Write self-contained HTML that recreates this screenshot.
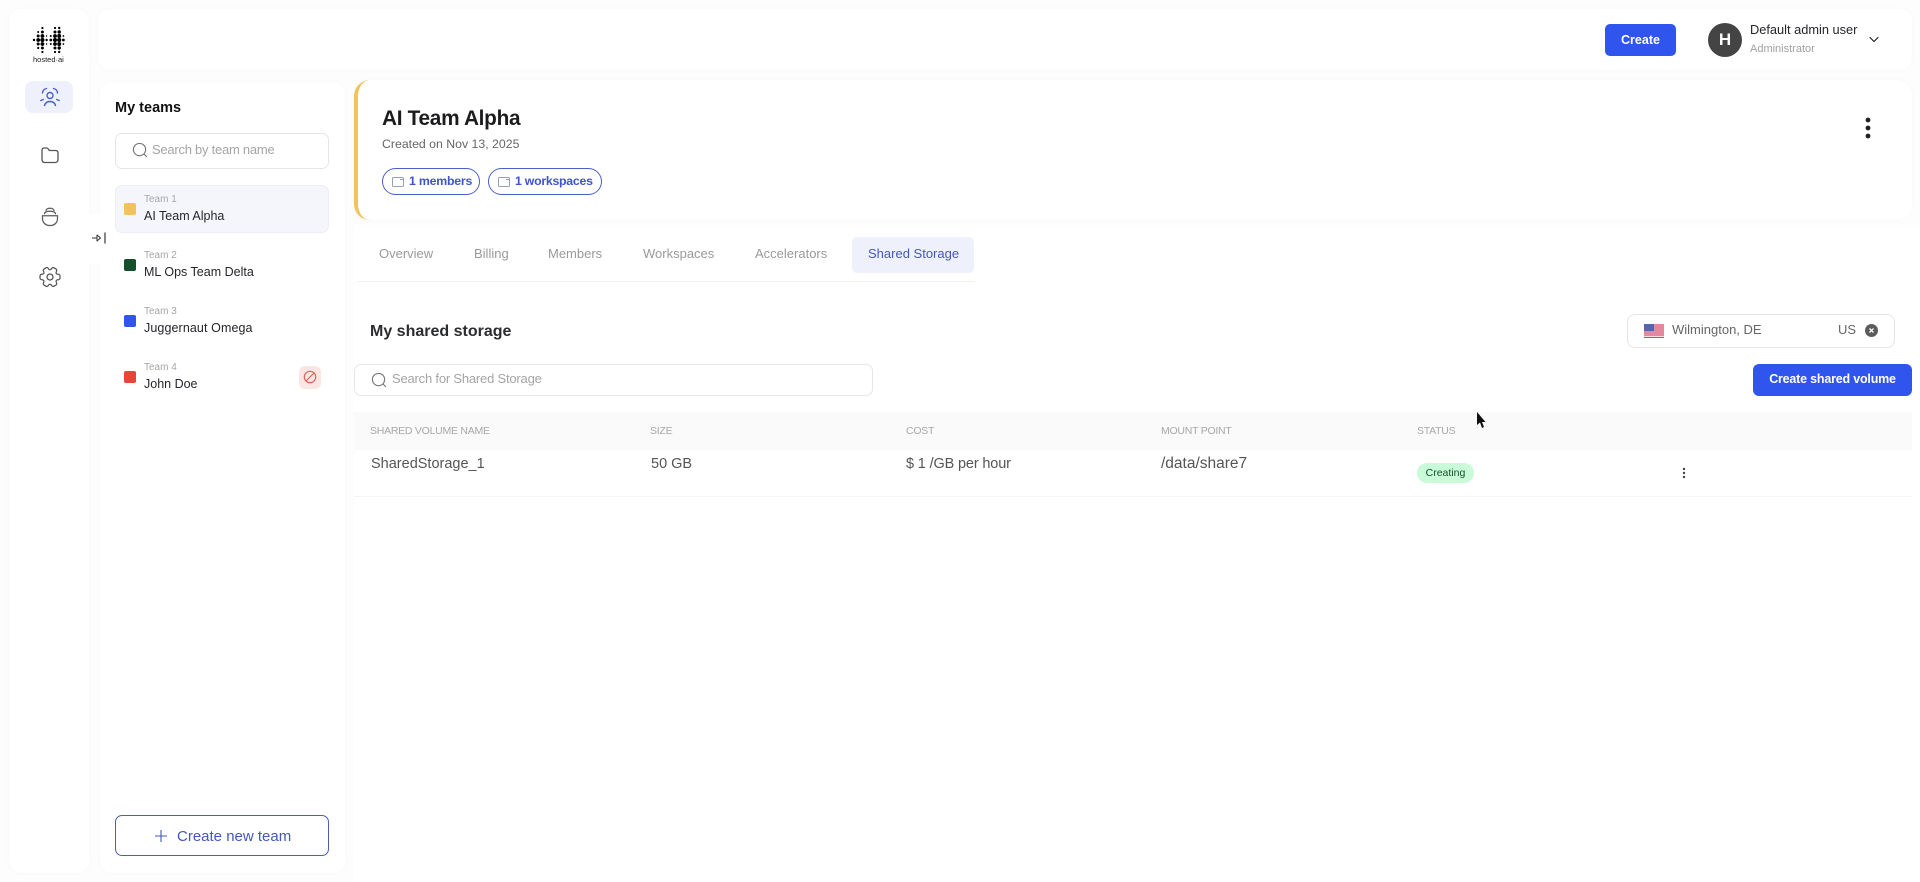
<!DOCTYPE html>
<html lang="en">
<head>
<meta charset="utf-8">
<title>Shared Storage</title>
<style>
html,body{margin:0;padding:0;width:1920px;height:882px;overflow:hidden;background:#fdfdfd;font-family:"Liberation Sans",sans-serif;}
#root{position:absolute;left:0;top:0;width:1920px;height:882px;filter:blur(.3px);}
.a{position:absolute;box-sizing:border-box;}
.t{position:absolute;white-space:nowrap;line-height:20px;height:20px;}
.card{position:absolute;box-sizing:border-box;background:#fff;border-radius:12px;box-shadow:0 0 5px rgba(0,0,0,.03);}
.lbl{font-size:10px;color:#a6a6a6;}
.nm{font-size:12.5px;color:#25262b;}
.sq{position:absolute;left:124px;width:12px;height:12px;border-radius:2px;}
.tab{font-size:13px;color:#9a9a9a;top:244px;}
.th{font-size:10.5px;color:#a8a8a8;top:421px;letter-spacing:-.25px;}
.td{font-size:14.5px;color:#555;top:454px;}
svg{position:absolute;display:block;overflow:visible;}
</style>
</head>
<body>
<div id="root">

<div class="a" style="left:354px;top:225px;width:1566px;height:657px;background:#fff;"></div>

<!-- sidebar -->
<div class="card" style="left:9px;top:9px;width:80px;height:864px;"></div>
<svg style="left:0;top:0" width="90" height="70" fill="#000">
<circle cx="34" cy="40" r="1.200"/>
<circle cx="38.200" cy="32" r="1"/><circle cx="38.200" cy="36" r="1.500"/><circle cx="38.200" cy="40" r="1.900"/><circle cx="38.200" cy="44" r="1.500"/><circle cx="38.200" cy="48" r="1.100"/>
<circle cx="42.400" cy="28" r="1.100"/><circle cx="42.400" cy="32" r="1.500"/><circle cx="42.400" cy="36" r="1.900"/><circle cx="42.400" cy="40" r="2.100"/><circle cx="42.400" cy="44" r="1.900"/><circle cx="42.400" cy="48" r="1.500"/><circle cx="42.400" cy="52" r="1.100"/>
<circle cx="46.600" cy="36" r=".7"/><circle cx="46.600" cy="40" r="1.200"/><circle cx="46.600" cy="44" r=".7"/>
<circle cx="50.800" cy="36" r="1"/><circle cx="50.800" cy="40" r="1.400"/><circle cx="50.800" cy="44" r="1"/>
<circle cx="55" cy="28" r="1.100"/><circle cx="55" cy="32" r="1.500"/><circle cx="55" cy="36" r="1.900"/><circle cx="55" cy="40" r="2.100"/><circle cx="55" cy="44" r="1.900"/><circle cx="55" cy="48" r="1.500"/><circle cx="55" cy="52" r="1.100"/>
<circle cx="59.200" cy="28" r="1.200"/><circle cx="59.200" cy="32" r="1.700"/><circle cx="59.200" cy="36" r="2"/><circle cx="59.200" cy="40" r="2.100"/><circle cx="59.200" cy="44" r="2"/><circle cx="59.200" cy="48" r="1.700"/><circle cx="59.200" cy="52" r="1.200"/>
<circle cx="63.400" cy="36" r=".9"/><circle cx="63.400" cy="40" r="1.400"/><circle cx="63.400" cy="44" r=".9"/>
</svg>
<div class="t" style="left:33px;top:50px;font-size:7.500px;color:#222;">hosted·ai</div>

<div class="a" style="left:25px;top:81px;width:48px;height:32px;background:#eef0fb;border-radius:8px;"></div>
<svg style="left:38px;top:85px" width="24" height="24" viewBox="0 0 24 24" fill="none" stroke="#4a5fc5" stroke-width="1.400" stroke-linecap="round" stroke-linejoin="round">
<circle cx="12" cy="10.500" r="3"/><path d="M6.500 20.500c.8-2.800 2.900-4 5.500-4s4.700 1.200 5.500 4"/><path d="M4.500 8c0-2.500 1.700-4 4-4.500"/><path d="M19.500 8c0-2.500-1.700-4-4-4.500"/><path d="M2.800 15.500l2.500-1"/><path d="M21.200 15.500l-2.500-1"/>
</svg>
<svg style="left:40px;top:145px" width="20" height="20" viewBox="0 0 20 20" fill="none" stroke="#555" stroke-width="1.300" stroke-linecap="round" stroke-linejoin="round">
<path d="M2 5.500C2 3.800 2.800 3 4.300 3H6.500c1 0 1.500.4 2 1.200L9.300 5.500H15.500C17.100 5.500 18 6.400 18 8V14.500c0 2-1 3-3 3H5c-2 0-3-1-3-3Z"/>
</svg>
<svg style="left:40px;top:207px" width="20" height="20" viewBox="0 0 20 20" fill="none" stroke="#5c5c5c" stroke-width="1.250" stroke-linecap="round" stroke-linejoin="round">
<path d="M6 3.800C6 2.200 7.800 1.300 10 1.300s4 .9 4 2.500"/><path d="M4.500 6.800C4.500 5.200 7 4.300 10 4.300s5.500.9 5.500 2.500"/><path d="M2.500 8.800H17.500"/><path d="M2.500 8.800V11.500c0 4 3 7 7 7h1c4 0 7-3 7-7V8.800"/>
</svg>
<svg style="left:38px;top:265px" width="24" height="24" viewBox="0 0 24 24" fill="none" stroke="#555" stroke-width="1.250" stroke-linecap="round" stroke-linejoin="round">
<path d="M12 15a3 3 0 1 0 0-6 3 3 0 0 0 0 6Z"/><path d="M2 12.880v-1.760c0-1.040.85-1.900 1.900-1.900 1.810 0 2.550-1.280 1.640-2.850-.52-.9-.21-2.070.7-2.590l1.730-.99c.79-.47 1.810-.19 2.280.6l.11.19c.9 1.570 2.380 1.570 3.290 0l.11-.19c.47-.79 1.490-1.070 2.280-.6l1.730.99c.91.52 1.220 1.690.7 2.590-.91 1.570-.17 2.850 1.640 2.850 1.040 0 1.900.85 1.900 1.900v1.760c0 1.040-.85 1.900-1.900 1.900-1.810 0-2.550 1.280-1.640 2.850.52.91.21 2.070-.7 2.590l-1.730.99c-.79.47-1.810.19-2.280-.6l-.11-.19c-.9-1.570-2.380-1.570-3.290 0l-.11.19c-.47.79-1.490 1.070-2.280.6l-1.730-.99a1.900 1.900 0 0 1-.7-2.590c.91-1.570.17-2.850-1.640-2.850-1.050 0-1.900-.86-1.900-1.900Z"/>
</svg>

<!-- header -->
<div class="card" style="left:98px;top:9px;width:1814px;height:61px;"></div>
<div class="a" style="left:1605px;top:24px;width:71px;height:32px;background:#2f55ee;border-radius:5px;"></div>
<div class="t" style="left:1605px;width:71px;text-align:center;top:30px;font-size:12.500px;color:#fff;font-weight:bold;">Create</div>
<div class="a" style="left:1708px;top:23px;width:34px;height:34px;background:#444;border-radius:50%;"></div>
<div class="t" style="left:1708px;width:34px;text-align:center;top:30px;font-size:17px;color:#fff;font-weight:bold;">H</div>
<div class="t" style="left:1750px;top:20px;font-size:12.800px;color:#25262b;">Default admin user</div>
<div class="t" style="left:1750px;top:39px;font-size:11px;color:#a0a0a0;">Administrator</div>
<svg style="left:1869px;top:36px" width="10" height="8" viewBox="0 0 10 8" fill="none" stroke="#222" stroke-width="1.200" stroke-linecap="round" stroke-linejoin="round"><path d="M1 1.500 5 5.500 9 1.500"/></svg>

<!-- teams panel -->
<div class="card" style="left:100px;top:82px;width:245px;height:791px;"></div>
<div class="t" style="left:115px;top:98px;font-size:14.500px;font-weight:bold;color:#111;">My teams</div>
<div class="a" style="left:115px;top:133px;width:214px;height:36px;border:1px solid #e6e6e9;border-radius:7px;background:#fff;"></div>
<svg style="left:132px;top:142px" width="16" height="16" viewBox="0 0 17 17" fill="none" stroke="#777" stroke-width="1.200" stroke-linecap="round"><circle cx="8" cy="8" r="6.500"/><path d="M12.800 12.800 15.500 15.500"/></svg>
<div class="t" style="left:152px;top:140px;font-size:13px;color:#a5a5a5;letter-spacing:-.25px;">Search by team name</div>

<div class="a" style="left:115px;top:185px;width:214px;height:48px;background:#f5f6fb;border:1px solid #eceef5;border-radius:7px;"></div>
<div class="sq" style="top:203px;background:#f2c35c;"></div>
<div class="t lbl" style="left:144px;top:190px;">Team 1</div>
<div class="t nm" style="left:144px;top:206px;">AI Team Alpha</div>
<div class="sq" style="top:259px;background:#14502b;"></div>
<div class="t lbl" style="left:144px;top:246px;">Team 2</div>
<div class="t nm" style="left:144px;top:262px;">ML Ops Team Delta</div>
<div class="sq" style="top:315px;background:#2f55ee;"></div>
<div class="t lbl" style="left:144px;top:302px;">Team 3</div>
<div class="t nm" style="left:144px;top:318px;letter-spacing:.1px;">Juggernaut Omega</div>
<div class="sq" style="top:371px;background:#ea4438;"></div>
<div class="t lbl" style="left:144px;top:358px;">Team 4</div>
<div class="t nm" style="left:144px;top:374px;">John Doe</div>
<div class="a" style="left:299px;top:366px;width:22px;height:23px;background:#fbe6e4;border-radius:6px;"></div>
<svg style="left:303px;top:370px" width="14" height="14" viewBox="0 0 14 14" fill="none" stroke="#e0645c" stroke-width="1.200"><circle cx="7" cy="7" r="5.700"/><path d="M3 11 11 3"/></svg>

<div class="a" style="left:115px;top:815px;width:214px;height:41px;border:1px solid #4a5fb5;border-radius:7px;background:#fff;"></div>
<svg style="left:155px;top:830px" width="12" height="12" viewBox="0 0 13 13" fill="none" stroke="#4357c0" stroke-width="1.200"><path d="M6.500 0V13M0 6.500H13"/></svg>
<div class="t" style="left:177px;top:827px;font-size:15px;color:#4357c0;">Create new team</div>

<!-- collapse handle -->
<div class="a" style="left:88px;top:214px;width:22px;height:50px;background:#fff;"></div>
<svg style="left:91px;top:232px" width="16" height="12" viewBox="0 0 16 12" fill="none" stroke="#333" stroke-width="1" stroke-linejoin="round"><path d="M1 6H6"/><path d="M6 3 9.500 6 6 9Z"/><path d="M14 .5V11.500" stroke-width="1.200"/></svg>

<!-- team header card -->
<div class="card" style="left:354px;top:80px;width:1558px;height:140px;border-left:4px solid #f2c35c;border-radius:16px;"></div>
<div class="t" style="left:382px;top:109px;font-size:20.800px;font-weight:bold;color:#1c1c1f;letter-spacing:-.3px;">AI Team Alpha</div>
<div class="t" style="left:382px;top:134px;font-size:12.300px;color:#666;">Created on Nov 13, 2025</div>
<div class="a" style="left:382px;top:168px;width:98px;height:27px;border:1px solid #4a5fc5;border-radius:14px;"></div>
<svg style="left:392px;top:177px" width="12" height="10" viewBox="0 0 12 10" fill="none" stroke="#9aa0ad" stroke-width="1"><rect x=".5" y=".5" width="11" height="9" rx="1"/><path d="M8 2.500H11"/></svg>
<div class="t" style="left:409px;top:171px;font-size:12.300px;font-weight:bold;color:#3f55c5;letter-spacing:-.2px;">1 members</div>
<div class="a" style="left:488px;top:168px;width:114px;height:27px;border:1px solid #4a5fc5;border-radius:14px;"></div>
<svg style="left:498px;top:177px" width="12" height="10" viewBox="0 0 12 10" fill="none" stroke="#9aa0ad" stroke-width="1"><rect x=".5" y=".5" width="11" height="9" rx="1"/><path d="M8 2.500H11"/></svg>
<div class="t" style="left:515px;top:171px;font-size:12.300px;font-weight:bold;color:#3f55c5;letter-spacing:-.25px;">1 workspaces</div>
<svg style="left:1863px;top:116px" width="10" height="24" fill="#222"><circle cx="5" cy="4" r="2.400"/><circle cx="5" cy="12" r="2.400"/><circle cx="5" cy="20" r="2.400"/></svg>

<!-- tabs -->
<div class="a" style="left:357px;top:281px;width:618px;height:1px;background:#f2f2f4;"></div>
<div class="t tab" style="left:379px;">Overview</div>
<div class="t tab" style="left:474px;">Billing</div>
<div class="t tab" style="left:548px;">Members</div>
<div class="t tab" style="left:643px;">Workspaces</div>
<div class="t tab" style="left:755px;">Accelerators</div>
<div class="a" style="left:852px;top:237px;width:122px;height:36px;background:#eef0fb;border-radius:5px;"></div>
<div class="t tab" style="left:868px;color:#4357c0;">Shared Storage</div>

<!-- toolbar -->
<div class="t" style="left:370px;top:322px;font-size:16px;font-weight:bold;color:#2b2c30;">My shared storage</div>
<div class="a" style="left:1627px;top:314px;width:268px;height:34px;border:1px solid #e6e6e9;border-radius:8px;background:#fff;"></div>
<svg style="left:1644px;top:324px" width="20" height="14" viewBox="0 0 20 14">
<rect width="20" height="14" fill="#e6889c"/><rect y="12" width="20" height="1" fill="#f7dbe1"/><rect y="13" width="20" height="1" fill="#cf4a60"/><rect width="10" height="7" fill="#5a63ad"/></svg>
<div class="t" style="left:1672px;top:320px;font-size:13px;color:#666;">Wilmington, DE</div>
<div class="t" style="left:1838px;top:320px;font-size:13px;color:#666;">US</div>
<svg style="left:1865px;top:324px" width="13" height="13" viewBox="0 0 13 13"><circle cx="6.500" cy="6.500" r="6.500" fill="#5c5c5c"/><path d="M4.500 4.500 8.500 8.500M8.500 4.500 4.500 8.500" stroke="#fff" stroke-width="1.300"/></svg>

<div class="a" style="left:354px;top:364px;width:519px;height:32px;border:1px solid #e6e6e9;border-radius:7px;background:#fff;"></div>
<svg style="left:371px;top:372px" width="16" height="16" viewBox="0 0 17 17" fill="none" stroke="#777" stroke-width="1.200" stroke-linecap="round"><circle cx="8" cy="8" r="6.500"/><path d="M12.800 12.800 15.500 15.500"/></svg>
<div class="t" style="left:392px;top:369px;font-size:13px;color:#a5a5a5;letter-spacing:-.2px;">Search for Shared Storage</div>
<div class="a" style="left:1753px;top:364px;width:159px;height:32px;background:#2f55ee;border-radius:6px;"></div>
<div class="t" style="left:1753px;width:159px;text-align:center;top:369px;font-size:12.500px;font-weight:bold;color:#fff;letter-spacing:-.2px;">Create shared volume</div>

<!-- table -->
<div class="a" style="left:354px;top:412px;width:1558px;height:38px;background:#fafafa;"></div>
<div class="a" style="left:354px;top:496px;width:1558px;height:1px;background:#f5f5f6;"></div>
<div class="t th" style="left:370px;">SHARED VOLUME NAME</div>
<div class="t th" style="left:650px;">SIZE</div>
<div class="t th" style="left:906px;">COST</div>
<div class="t th" style="left:1161px;">MOUNT POINT</div>
<div class="t th" style="left:1417px;">STATUS</div>
<div class="t td" style="left:371px;">SharedStorage_1</div>
<div class="t td" style="left:651px;">50 GB</div>
<div class="t td" style="left:906px;letter-spacing:-.15px;">$ 1 /GB per hour</div>
<div class="t td" style="left:1161px;font-size:15.500px;">/data/share7</div>
<div class="a" style="left:1417px;top:463px;width:57px;height:20px;background:#c9fbd8;border-radius:10px;"></div>
<div class="t" style="left:1417px;width:57px;text-align:center;top:463px;font-size:10.500px;color:#14502b;">Creating</div>
<svg style="left:1681px;top:467px" width="6" height="12" fill="#444"><circle cx="3" cy="2" r="1.200"/><circle cx="3" cy="6" r="1.200"/><circle cx="3" cy="10" r="1.200"/></svg>
<svg style="left:1476px;top:412px" width="10" height="17" viewBox="0 0 10 17"><path d="M1 0 1 13 4 10.500 6 16 8 15 6 10 9.500 10Z" fill="#111"/></svg>

</div>
</body>
</html>
